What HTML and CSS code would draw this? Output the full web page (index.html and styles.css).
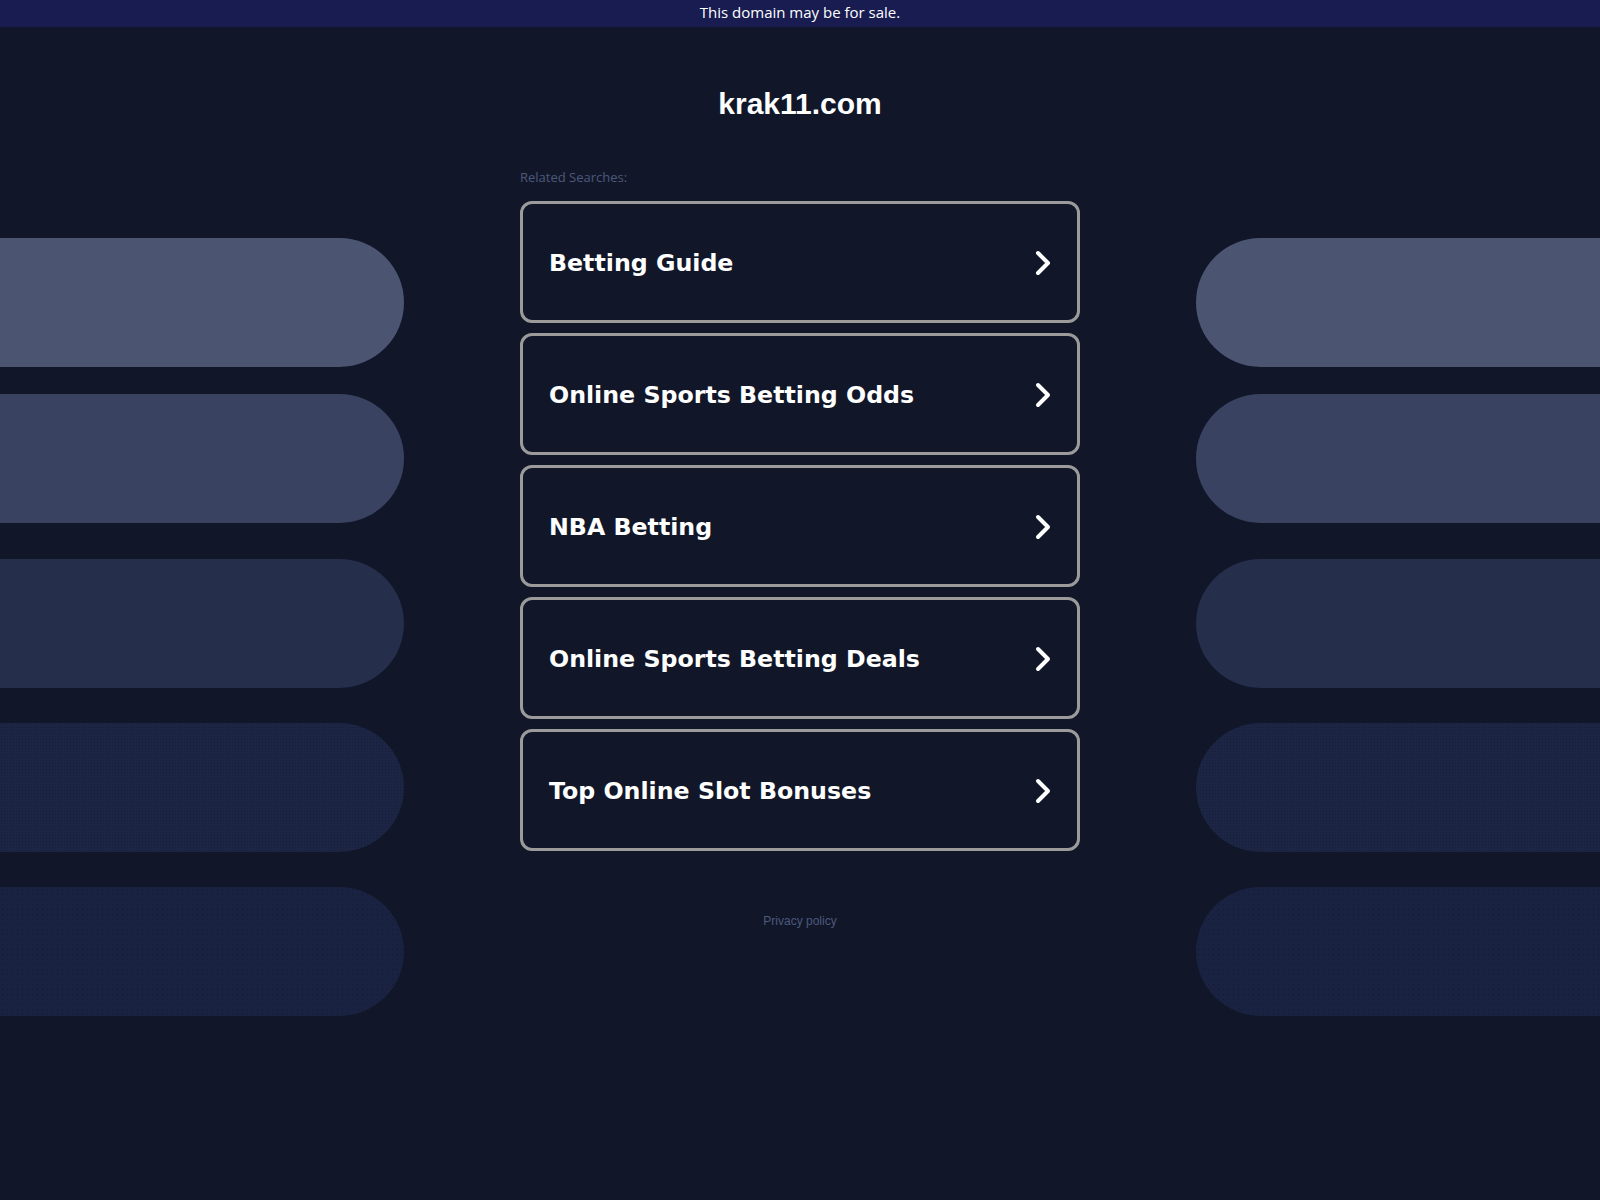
FILE: index.html
```html
<!DOCTYPE html>
<html lang="en">
<head>
<meta charset="utf-8">
<title>krak11.com</title>
<link rel="stylesheet" href="styles.css">
</head>
<body>
<div class="topbar">This domain may be for sale.</div>
<div class="stage">
  <aside class="decor decor-left">
    <div class="pill p1"></div>
    <div class="pill p2"></div>
    <div class="pill p3"></div>
    <div class="pill p4"></div>
    <div class="pill p5"></div>
  </aside>
  <main class="center">
    <h1 class="domain">krak11.com</h1>
    <div class="related">Related Searches:</div>
    <div class="cards">
      <a class="card" href="#"><span class="card-text">Betting Guide</span><svg class="chev" viewBox="0 0 16 26" width="16" height="26"><polyline points="3,3 13,13 3,23"/></svg></a>
      <a class="card" href="#"><span class="card-text">Online Sports Betting Odds</span><svg class="chev" viewBox="0 0 16 26" width="16" height="26"><polyline points="3,3 13,13 3,23"/></svg></a>
      <a class="card" href="#"><span class="card-text">NBA Betting</span><svg class="chev" viewBox="0 0 16 26" width="16" height="26"><polyline points="3,3 13,13 3,23"/></svg></a>
      <a class="card" href="#"><span class="card-text">Online Sports Betting Deals</span><svg class="chev" viewBox="0 0 16 26" width="16" height="26"><polyline points="3,3 13,13 3,23"/></svg></a>
      <a class="card" href="#"><span class="card-text">Top Online Slot Bonuses</span><svg class="chev" viewBox="0 0 16 26" width="16" height="26"><polyline points="3,3 13,13 3,23"/></svg></a>
    </div>
    <a class="privacy" href="#">Privacy policy</a>
  </main>
  <aside class="decor decor-right">
    <div class="pill p1"></div>
    <div class="pill p2"></div>
    <div class="pill p3"></div>
    <div class="pill p4"></div>
    <div class="pill p5"></div>
  </aside>
</div>
</body>
</html>
```

FILE: styles.css
```css
html, body {
  margin: 0;
  padding: 0;
}
body {
  background: #111729;
  width: 1600px;
  height: 1200px;
  overflow: hidden;
  font-family: "Liberation Sans", Arial, sans-serif;
}
.topbar {
  height: 27px;
  background: #181c51;
  color: #ffffff;
  font-family: "Open Sans", "Liberation Sans", sans-serif;
  font-weight: 500;
  font-size: 15px;
  line-height: 25px;
  text-align: center;
}
.stage {
  display: flex;
  align-items: flex-start;
}
.decor {
  width: 404px;
  flex: none;
  display: flex;
  flex-direction: column;
  padding-top: 211px;
}
.pill {
  height: 129px;
  flex: none;
}
.decor-left .pill { border-radius: 0 65px 65px 0; }
.decor-right .pill { border-radius: 65px 0 0 65px; }
.p1 { background: #4b5572; }
.p2 { background: #394261; margin-top: 27px; }
.p3 { background: #252e4b; margin-top: 36px; }
.p4 {
  margin-top: 35px;
  background-color: #1c2544;
  background-image: radial-gradient(circle, #151d38 0.7px, transparent 0.9px);
  background-size: 3px 3px;
}
.p5 {
  margin-top: 35px;
  background-color: #1a2242;
  background-image: radial-gradient(circle, #111a33 0.8px, transparent 1px);
  background-size: 5px 5px;
}
.center {
  flex: 1;
  display: flex;
  flex-direction: column;
  align-items: center;
  padding-top: 59px;
}
.domain {
  margin: 0;
  font-family: "Liberation Sans", Arial, sans-serif;
  font-weight: bold;
  font-size: 30px;
  line-height: 36px;
  color: #ffffff;
}
.related {
  width: 560px;
  margin-top: 47px;
  font-family: "Open Sans", "Liberation Sans", sans-serif;
  font-size: 13px;
  line-height: 16px;
  color: #4d587b;
}
.cards {
  width: 560px;
  margin-top: 16px;
  display: flex;
  flex-direction: column;
  gap: 10px;
}
.card {
  box-sizing: border-box;
  height: 122px;
  border: 3px solid #9b9b9b;
  border-radius: 12px;
  display: flex;
  align-items: center;
  justify-content: space-between;
  padding: 2px 26px 0 26px;
  text-decoration: none;
}
.card-text {
  font-family: "DejaVu Sans", Verdana, sans-serif;
  font-weight: bold;
  font-size: 23.7px;
  color: #ffffff;
}
.chev {
  display: block;
  fill: none;
  stroke: #ffffff;
  stroke-width: 4;
  stroke-linecap: round;
  stroke-linejoin: round;
}
.privacy {
  margin-top: 63px;
  font-family: "Liberation Sans", Arial, sans-serif;
  font-size: 12px;
  line-height: 14px;
  color: #4d587b;
  text-decoration: none;
}
```
